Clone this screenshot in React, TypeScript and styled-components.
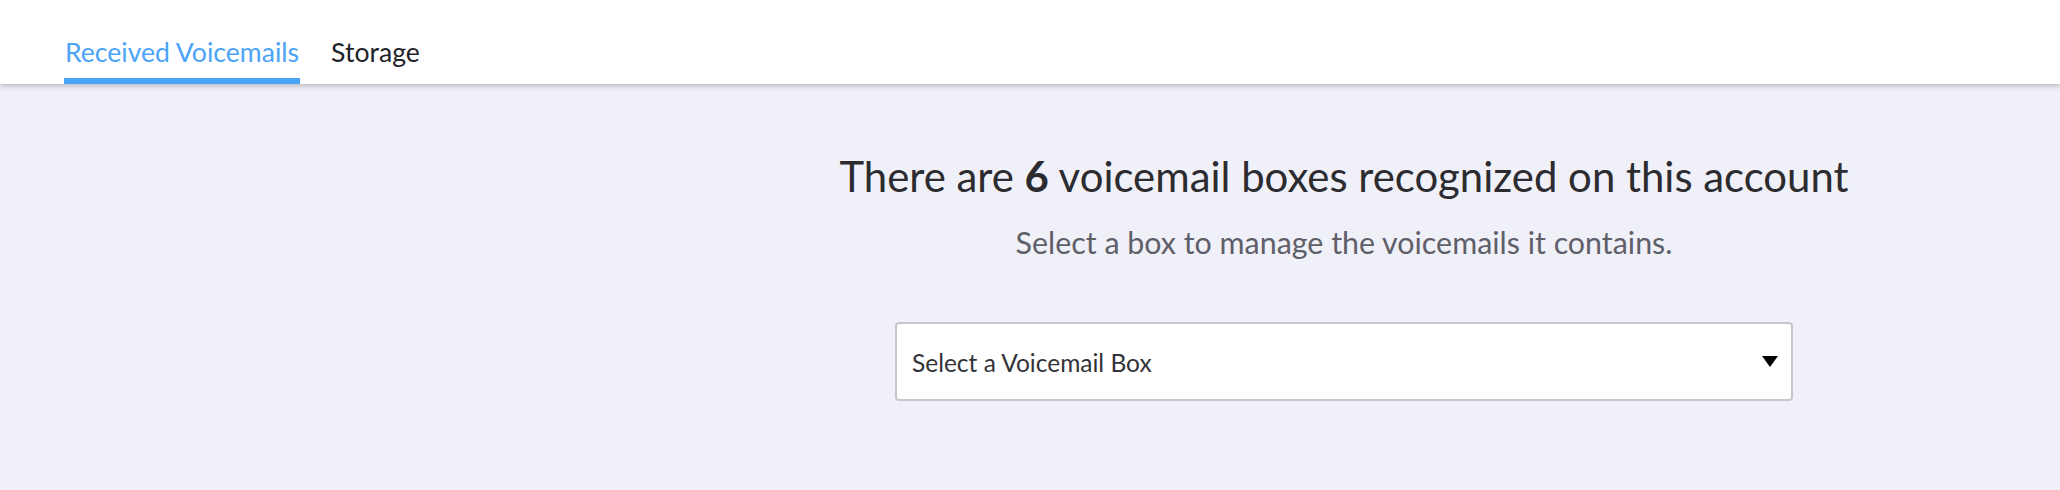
import React from "react";
import styled, { createGlobalStyle } from "styled-components";

const GlobalStyle = createGlobalStyle`
  html, body {
    margin: 0;
    padding: 0;
    background: #f0f0f8;
    font-family: Lato, "Noto Sans", sans-serif;
  }
  #root {
    min-height: 490px;
  }
`;

const Page = styled.div`
  display: flex;
  flex-direction: column;
  min-height: 490px;
  background: #f0f0f8;
`;

const Header = styled.header`
  position: relative;
  z-index: 1;
  height: 84px;
  background: #ffffff;
  box-shadow: 0 2px 5px rgba(40, 40, 60, 0.28);
  display: flex;
  align-items: flex-end;
  padding-left: 64px;
  gap: 30px;
`;

const Tab = styled.button<{ $active?: boolean }>`
  appearance: none;
  background: none;
  border: 0;
  margin: 0;
  padding: 0 1px 10px;
  border-bottom: 6px solid ${(p) => (p.$active ? "#4ca4f8" : "transparent")};
  font-family: Lato, "Noto Sans", sans-serif;
  font-size: 26.6px;
  line-height: 32px;
  font-weight: 400;
  color: ${(p) => (p.$active ? "#4ca4f8" : "#222228")};
  cursor: pointer;
`;

const Body = styled.div`
  flex: 1;
  display: grid;
  grid-template-columns: 628px 1fr;
`;

const Sidebar = styled.aside``;

const Main = styled.main`
  display: flex;
  flex-direction: column;
  align-items: center;
  padding-top: 67px;
`;

const Title = styled.h1`
  margin: 0;
  font-family: Lato, "Noto Sans", sans-serif;
  font-size: 41.9px;
  font-weight: 400;
  line-height: 50px;
  color: #2b2b30;
  text-align: center;
`;

const Subtitle = styled.p`
  margin: 23px 0 0;
  font-family: Lato, "Noto Sans", sans-serif;
  font-size: 30.4px;
  font-weight: 400;
  line-height: 36px;
  color: #5f5f6a;
  text-align: center;
`;

const SelectBox = styled.div`
  margin-top: 62px;
  box-sizing: border-box;
  width: 898px;
  height: 79px;
  background: #ffffff;
  border: 2px solid #c6c6ce;
  border-radius: 4px;
  display: flex;
  align-items: center;
  justify-content: space-between;
  padding: 0 13px 0 15px;
  cursor: pointer;
`;

const SelectLabel = styled.span`
  font-family: Lato, "Noto Sans", sans-serif;
  font-size: 24.5px;
  line-height: 30px;
  color: #333338;
  padding-top: 2px;
`;

const Caret = styled.svg`
  display: block;
  width: 16px;
  height: 11px;
  margin-top: -1px;
`;

export default function App() {
  return (
    <>
      <GlobalStyle />
      <Page>
        <Header>
          <Tab $active>Received Voicemails</Tab>
          <Tab>Storage</Tab>
        </Header>
        <Body>
          <Sidebar />
          <Main>
            <Title>
              There are <b>6</b> voicemail boxes recognized on this account
            </Title>
            <Subtitle>Select a box to manage the voicemails it contains.</Subtitle>
            <SelectBox role="combobox" aria-expanded={false}>
              <SelectLabel>Select a Voicemail Box</SelectLabel>
              <Caret viewBox="0 0 16 11" aria-hidden="true">
                <polygon points="0,0 16,0 8,11" fill="#000" />
              </Caret>
            </SelectBox>
          </Main>
        </Body>
      </Page>
    </>
  );
}
